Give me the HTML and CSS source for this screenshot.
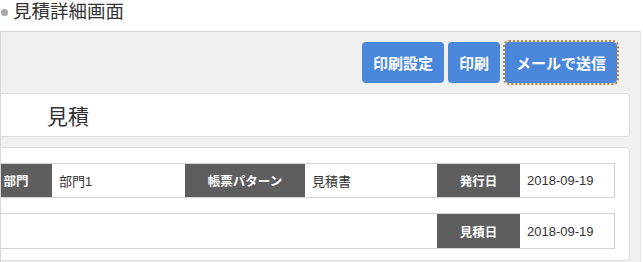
FILE: index.html
```
<!DOCTYPE html>
<html lang="ja">
<head>
    <meta charset="UTF-8">
    <title>見積詳細画面</title>
    <link rel="stylesheet" href="styles.css">
</head>
<body>

<h1 class="page-title"><span class="dot"></span>見積詳細画面</h1>

<div class="detail-panel">
    <div class="btn-bar">
        <button class="btn">印刷設定</button>
        <button class="btn">印刷</button>
        <button class="btn is-focus">メールで送信</button>
    </div>

    <div class="card card-head">
        <span class="doc-name">見積</span>
    </div>

    <div class="card card-body">
        <div class="info-row">
            <div class="cell label">部門</div>
            <div class="cell">部門1</div>
            <div class="cell label">帳票パターン</div>
            <div class="cell">見積書</div>
            <div class="cell label">発行日</div>
            <div class="cell">2018-09-19</div>
        </div>
        <div class="info-row">
            <div class="cell blank"></div>
            <div class="cell label">見積日</div>
            <div class="cell">2018-09-19</div>
        </div>
    </div>
</div>

</body>
</html>
```

FILE: styles.css
```
body {
    margin: 0;
    font-family: "Liberation Sans", "Noto Sans CJK JP", sans-serif;
    color: #333;
    background: #fff;
}

.page-title {
    margin: 0 0 7px;
    height: 24px;
    line-height: 24px;
    font-size: 18.5px;
    font-weight: normal;
    color: #333;
    display: flex;
    align-items: center;
}
.page-title .dot {
    width: 7px;
    height: 7px;
    border-radius: 50%;
    background: #a8a8a8;
    margin: 0 5px 0 1px;
}

.detail-panel {
    margin-right: 2px;
    background: #f0f0f0;
    border: 1px solid #d8d8d8;
    border-right-color: #e2e2e2;
    padding: 10px 10px 20px 0;
    overflow: hidden;
}

.btn-bar {
    display: flex;
    justify-content: flex-end;
    gap: 4px;
    padding-right: 13px;
}
.btn {
    height: 41px;
    padding: 0 11px;
    border: none;
    border-radius: 4px;
    background: #4a87db;
    color: #fff;
    font-family: "Noto Sans CJK JP", sans-serif;
    font-size: 15px;
    font-weight: bold;
}
.btn.is-focus {
    outline: 2px dotted #b7823a;
    outline-offset: 0;
    margin-left: 1px;
    width: 112px;
}

.card {
    margin-left: -20px;
    background: #fff;
    border: 1px solid #dcdcdc;
    border-radius: 4px;
}
.card-head {
    margin-top: 10px;
    height: 42px;
    display: flex;
    align-items: center;
    padding-left: 65px;
}
.doc-name {
    font-family: "Noto Sans CJK JP", sans-serif;
    font-size: 21px;
    color: #333;
}

.card-body {
    margin-top: 10px;
    padding: 15px 14px 11px 0;
    display: flex;
    flex-direction: column;
    align-items: flex-end;
    gap: 15px;
}

.info-row {
    display: flex;
    height: 33px;
    border: 1px solid #d2d2d2;
}
.info-row + .info-row { height: 34px; }

.cell {
    box-sizing: border-box;
    display: flex;
    align-items: center;
    padding: 0 7px;
    font-size: 13px;
    color: #333;
    background: #fff;
}
.cell:nth-child(1) { width: 72px; }
.cell:nth-child(2) { width: 133px; }
.cell:nth-child(3) { width: 120px; }
.cell:nth-child(4) { width: 132px; }
.cell:nth-child(5) { width: 83px; }
.cell:nth-child(6) { width: 94px; }

.info-row .blank { width: 457px; }
.info-row .blank + .label { width: 83px; }
.info-row .blank ~ .cell:last-child { width: 94px; }

.cell.label {
    justify-content: center;
    background: #5e5e5e;
    color: #fff;
    font-family: "Noto Sans CJK JP", sans-serif;
    font-weight: bold;
    font-size: 12.5px;
}
```
